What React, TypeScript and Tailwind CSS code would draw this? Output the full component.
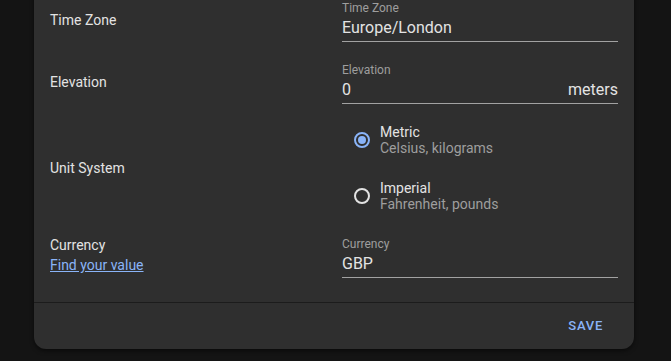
import React from "react";

function Field({ label, value, suffix }: { label: string; value: string; suffix?: string }) {
  return (
    <div className="w-[276px] h-[56px] flex flex-col pt-[14px]">
      <div className="text-[12px] leading-[16px] text-[#9e9e9e]">{label}</div>
      <div className="flex justify-between text-[16px] leading-[24px] text-[#e3e3e3]">
        <span>{value}</span>
        {suffix && <span>{suffix}</span>}
      </div>
      <div className="mt-[1px] h-px bg-[#a2a2a2]" />
    </div>
  );
}

function Radio({ checked, title, sub }: { checked: boolean; title: string; sub: string }) {
  return (
    <div className="h-[56px] flex items-center">
      <div className="w-[38px] flex items-center pl-[12px]">
        <div
          className={
            checked
              ? "w-4 h-4 rounded-full border-2 border-[#8ab4f8] flex items-center justify-center"
              : "w-4 h-4 rounded-full border-2 border-[#e3e3e3] flex items-center justify-center"
          }
        >
          {checked && <div className="w-2 h-2 rounded-full bg-[#8ab4f8]" />}
        </div>
      </div>
      <div className="flex flex-col">
        <span className="text-[14px] leading-[16px] text-[#e3e3e3]">{title}</span>
        <span className="text-[14px] leading-[16px] text-[#9e9e9e]">{sub}</span>
      </div>
    </div>
  );
}

export default function App() {
  return (
    <div
      className="w-[671px] h-[361px] overflow-hidden bg-[#141414] flex flex-col items-start"
      style={{ fontFamily: "Roboto, 'Liberation Sans', sans-serif" }}
    >
      <div className="ml-[34px] mt-[-30px] w-[600px] bg-[#2f2f2f] rounded-b-[12px] shadow-[0_2px_4px_rgba(0,0,0,0.5)]">
        <div className="px-4 pt-4 pb-[24px]">
          {/* Time Zone */}
          <div className="flex items-start">
            <div className="flex-1 pt-[24px] text-[14px] leading-[20px] text-[#e3e3e3]">Time Zone</div>
            <Field label="Time Zone" value="Europe/London" />
          </div>
          {/* Elevation */}
          <div className="flex items-start mt-[6px]">
            <div className="flex-1 pt-[24px] text-[14px] leading-[20px] text-[#e3e3e3]">Elevation</div>
            <Field label="Elevation" value="0" suffix="meters" />
          </div>
          {/* Unit System */}
          <div className="flex items-center mt-[8px]">
            <div className="flex-1 text-[14px] leading-[20px] text-[#e3e3e3]">Unit System</div>
            <div className="w-[276px] flex flex-col">
              <Radio checked title="Metric" sub="Celsius, kilograms" />
              <Radio checked={false} title="Imperial" sub="Fahrenheit, pounds" />
            </div>
          </div>
          {/* Currency */}
          <div className="flex items-start mt-[-2px]">
            <div className="flex-1 pt-[13px] flex flex-col text-[14px] leading-[20px]">
              <span className="text-[#e3e3e3]">Currency</span>
              <a className="text-[#8ab4f8] underline self-start">Find your value</a>
            </div>
            <Field label="Currency" value="GBP" />
          </div>
        </div>
        <div className="h-px bg-[#1c1c1c]" />
        <div className="h-[46px] flex items-center justify-end pr-[31px]">
          <span className="text-[13px] font-medium tracking-[0.75px] text-[#8ab4f8]">SAVE</span>
        </div>
      </div>
    </div>
  );
}
